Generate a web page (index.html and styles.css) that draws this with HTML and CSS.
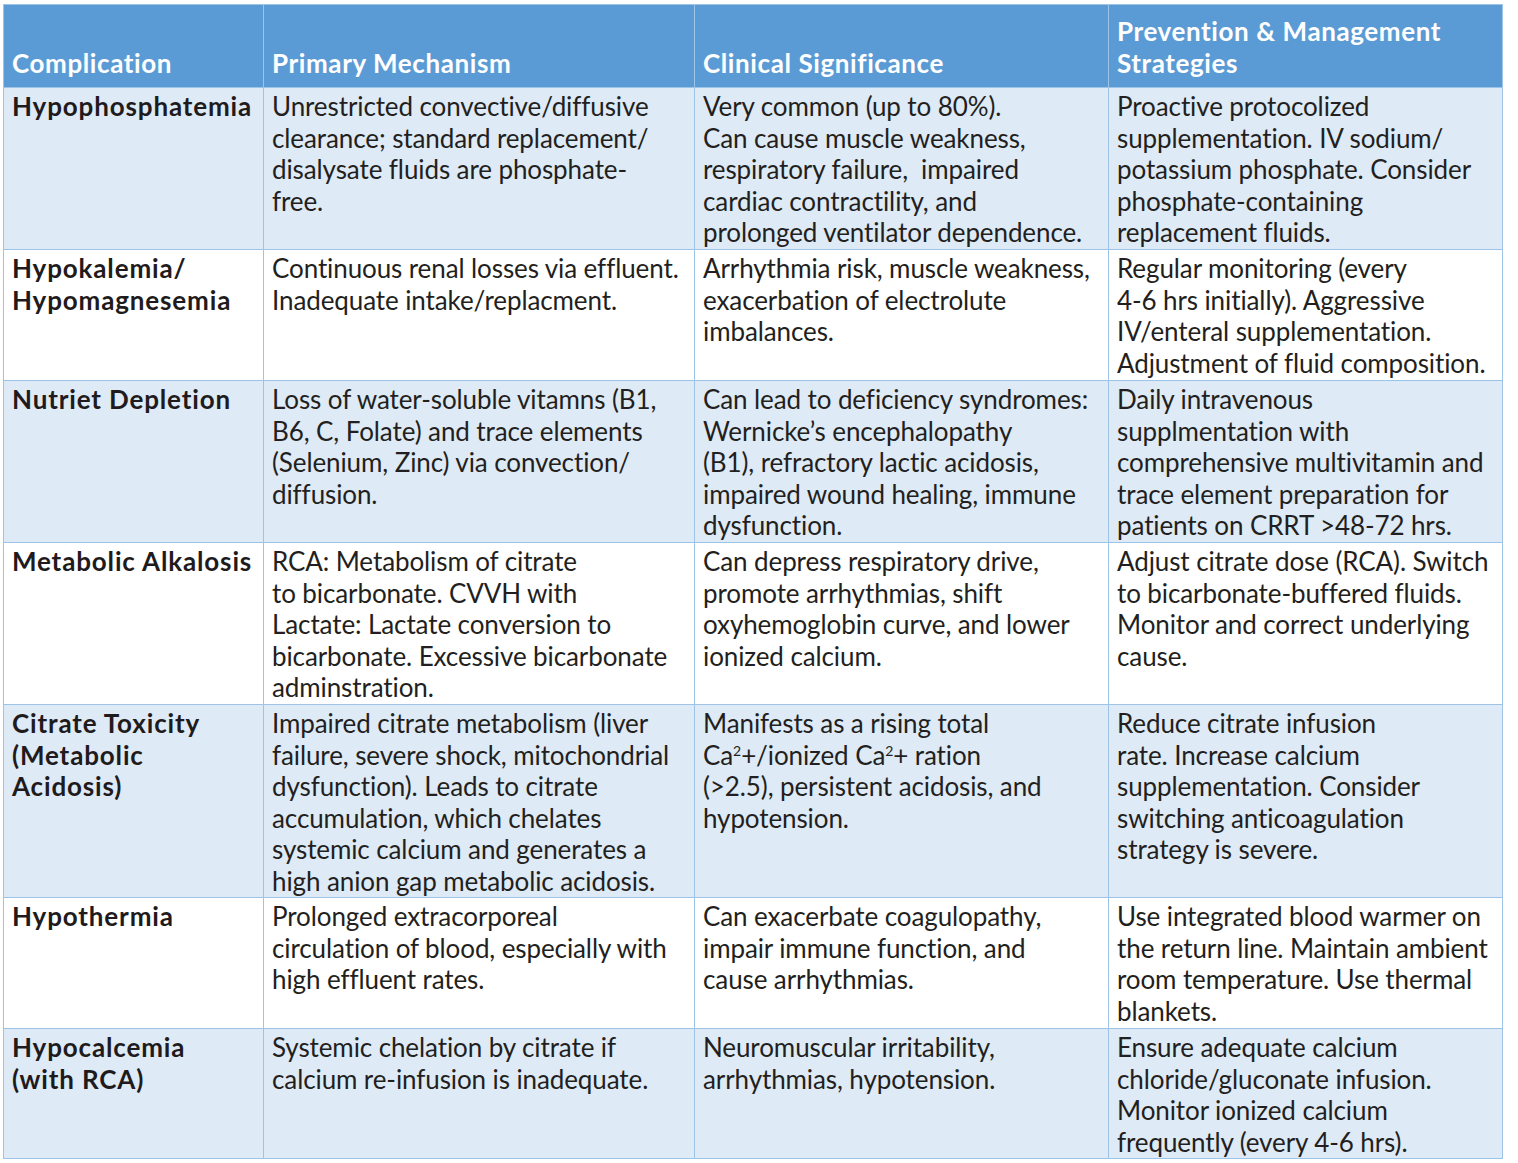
FILE: index.html
```html
<!DOCTYPE html>
<html>
<head>
<meta charset="utf-8">
<link rel="stylesheet" href="styles.css">
</head>
<body>
<table class="grid">
  <colgroup>
    <col class="c1"><col class="c2"><col class="c3"><col class="c4">
  </colgroup>
  <thead>
    <tr class="head">
      <th>Complication</th>
      <th>Primary Mechanism</th>
      <th>Clinical Significance</th>
      <th>Prevention &amp; Management<br>Strategies</th>
    </tr>
  </thead>
  <tbody>
    <tr class="shade r1">
      <td class="name">Hypophosphatemia</td>
      <td>Unrestricted convective/diffusive<br>clearance; standard replacement/<br>disalysate fluids are phosphate-<br>free.</td>
      <td>Very common (up to 80%).<br>Can cause muscle weakness,<br>respiratory failure,&nbsp; impaired<br>cardiac contractility, and<br>prolonged ventilator dependence.</td>
      <td>Proactive protocolized<br>supplementation. IV sodium/<br>potassium phosphate. Consider<br>phosphate-containing<br>replacement fluids.</td>
    </tr>
    <tr class="r2">
      <td class="name">Hypokalemia/<br>Hypomagnesemia</td>
      <td>Continuous renal losses via effluent.<br>Inadequate intake/replacment.</td>
      <td>Arrhythmia risk, muscle weakness,<br>exacerbation of electrolute<br>imbalances.</td>
      <td>Regular monitoring (every<br>4-6 hrs initially). Aggressive<br>IV/enteral supplementation.<br>Adjustment of fluid composition.</td>
    </tr>
    <tr class="shade r3">
      <td class="name">Nutriet Depletion</td>
      <td>Loss of water-soluble vitamns (B1,<br>B6, C, Folate) and trace elements<br>(Selenium, Zinc) via convection/<br>diffusion.</td>
      <td>Can lead to deficiency syndromes:<br>Wernicke’s encephalopathy<br>(B1), refractory lactic acidosis,<br>impaired wound healing, immune<br>dysfunction.</td>
      <td>Daily intravenous<br>supplmentation with<br>comprehensive multivitamin and<br>trace element preparation for<br>patients on CRRT &gt;48-72 hrs.</td>
    </tr>
    <tr class="r4">
      <td class="name">Metabolic Alkalosis</td>
      <td>RCA: Metabolism of citrate<br>to bicarbonate. CVVH with<br>Lactate: Lactate conversion to<br>bicarbonate. Excessive bicarbonate<br>adminstration.</td>
      <td>Can depress respiratory drive,<br>promote arrhythmias, shift<br>oxyhemoglobin curve, and lower<br>ionized calcium.</td>
      <td>Adjust citrate dose (RCA). Switch<br>to bicarbonate-buffered fluids.<br>Monitor and correct underlying<br>cause.</td>
    </tr>
    <tr class="shade r5">
      <td class="name">Citrate Toxicity<br>(Metabolic<br>Acidosis)</td>
      <td>Impaired citrate metabolism (liver<br>failure, severe shock, mitochondrial<br>dysfunction). Leads to citrate<br>accumulation, which chelates<br>systemic calcium and generates a<br>high anion gap metabolic acidosis.</td>
      <td>Manifests as a rising total<br>Ca<sup>2</sup>+/ionized Ca<sup>2</sup>+ ration<br>(&gt;2.5), persistent acidosis, and<br>hypotension.</td>
      <td>Reduce citrate infusion<br>rate. Increase calcium<br>supplementation. Consider<br>switching anticoagulation<br>strategy is severe.</td>
    </tr>
    <tr class="r6">
      <td class="name">Hypothermia</td>
      <td>Prolonged extracorporeal<br>circulation of blood, especially with<br>high effluent rates.</td>
      <td>Can exacerbate coagulopathy,<br>impair immune function, and<br>cause arrhythmias.</td>
      <td>Use integrated blood warmer on<br>the return line. Maintain ambient<br>room temperature. Use thermal<br>blankets.</td>
    </tr>
    <tr class="shade r7">
      <td class="name">Hypocalcemia<br>(with RCA)</td>
      <td>Systemic chelation by citrate if<br>calcium re-infusion is inadequate.</td>
      <td>Neuromuscular irritability,<br>arrhythmias, hypotension.</td>
      <td>Ensure adequate calcium<br>chloride/gluconate infusion.<br>Monitor ionized calcium<br>frequently (every 4-6 hrs).</td>
    </tr>
  </tbody>
</table>
</body>
</html>
```
FILE: styles.css
```css
html, body {
  margin: 0;
  padding: 0;
  background: #ffffff;
}
body {
  padding: 4px 0 0 3px;
  font-family: "Lato", "Noto Sans", sans-serif;
  color: #231f20;
}
.grid {
  border-collapse: collapse;
  table-layout: fixed;
  width: 1500px;
}
.c1 { width: 260px; }
.c2 { width: 431px; }
.c3 { width: 414px; }
.c4 { width: 394px; }
.grid th, .grid td {
  border: 1px solid #9dc3e6;
  text-align: left;
  white-space: nowrap;
  overflow: hidden;
}
.grid th {
  background: #5b9bd5;
  color: #ffffff;
  font-weight: 700;
  font-size: 26px;
  letter-spacing: 0.6px;
  line-height: 31.5px;
  vertical-align: bottom;
  padding: 0 6px 8px 8px;
  height: 74px;
}
.grid td {
  font-size: 26px;
  letter-spacing: -0.1px;
  line-height: 31.5px;
  vertical-align: top;
  padding: 3px 6px 0 8px;
}
.grid td.name {
  font-weight: 700;
  letter-spacing: 0.85px;
  color: #1f1b1c;
}
.shade td {
  background: #deeaf6;
}
.grid sup {
  font-size: 14px;
  line-height: 0;
  vertical-align: 9px;
}
.r1 td, .r3 td, .r4 td { height: 158px; }
.r2 td, .r6 td { height: 127px; }
.r5 td { height: 189px; }
.r7 td { height: 126px; }
```
